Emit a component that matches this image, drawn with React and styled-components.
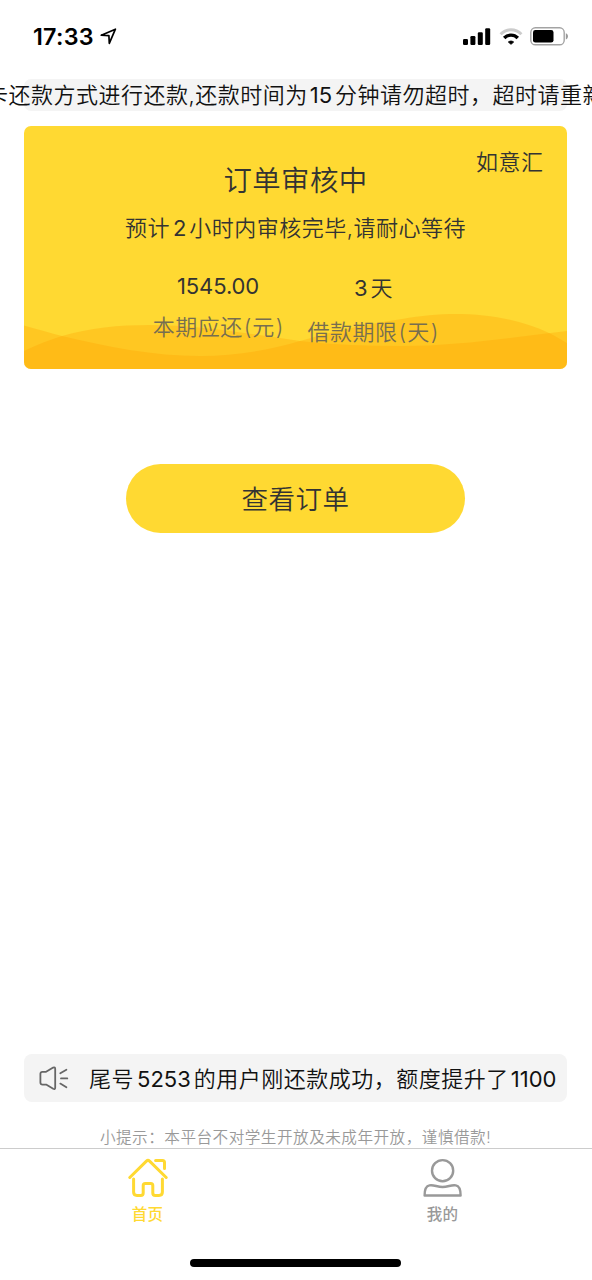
import React from "react";
import styled, { createGlobalStyle } from "styled-components";

const GlobalStyle = createGlobalStyle`
  * { box-sizing: border-box; }
  body {
    margin: 0;
    background: #fff;
    font-family: Inter, "Noto Sans CJK SC", sans-serif;
    color: #111;
  }
`;

const Screen = styled.div`
  width: 592px;
  height: 1280px;
  display: flex;
  flex-direction: column;
  overflow: hidden;
  background: #fff;
  padding-right: 1px;
`;

const StatusBar = styled.header`
  height: 79px;
  flex: none;
  display: flex;
  align-items: center;
  justify-content: space-between;
  padding: 0 22px 6px 33px;
`;

const StatusGroup = styled.div`
  display: flex;
  align-items: center;
  gap: ${(p) => p.$gap}px;
`;

const Clock = styled.span`
  font-size: 23.3px;
  line-height: 28px;
  font-weight: 600;
  letter-spacing: 0.25px;
  color: #000;
`;

const Text = styled.span`
  font-size: ${(p) => p.$size || 22}px;
  letter-spacing: ${(p) => p.$track ?? 0.5}px;
  line-height: ${(p) => p.$line || 32}px;
  font-weight: ${(p) => p.$weight || 360};
  color: ${(p) => p.$color || "#111"};
  white-space: nowrap;
`;

const Num = styled.span`
  font-size: 22px;
  font-weight: 400;
  letter-spacing: ${(p) => p.$track ?? 0}px;
  margin: 0 ${(p) => p.$after ?? 3}px 0 ${(p) => p.$before ?? 3}px;
`;

const Paren = styled.span`
  font-size: 22px;
  letter-spacing: 0;
  margin: 0 1px;
`;

const Notice = styled.div`
  height: 32px;
  flex: none;
  margin: 0 24px;
  border-radius: 7px;
  background: #f4f4f4;
  display: flex;
  justify-content: center;
`;

const Card = styled.section`
  position: relative;
  height: 243px;
  flex: none;
  margin: 15px 24px 0;
  border-radius: 7px;
  overflow: hidden;
  background: #ffd932;
  display: flex;
  flex-direction: column;
  align-items: center;
  padding-top: 34px;
`;

const Waves = styled.svg`
  position: absolute;
  left: 0;
  bottom: 0;
`;

const Brand = styled.div`
  position: absolute;
  top: 20px;
  right: 23.5px;
`;

const CardTitle = styled.h1`
  margin: 0;
  height: 42px;
  display: flex;
`;

const CardHint = styled.p`
  margin: 10px 0 0;
  height: 32px;
  display: flex;
`;

const Figures = styled.div`
  position: relative;
  left: 0.5px;
  display: flex;
  gap: 23px;
  margin-top: 26px;
`;

const Figure = styled.div`
  display: flex;
  flex-direction: column;
  align-items: center;
  gap: ${(p) => p.$gap}px;
  padding-top: ${(p) => p.$top || 0}px;
`;

const OrderButton = styled.button`
  width: 339px;
  height: 69px;
  flex: none;
  align-self: center;
  margin-top: 94.5px;
  padding: 2px 0 0;
  border: 0;
  border-radius: 35px;
  background: #ffd932;
  font-family: inherit;
`;

const News = styled.div`
  height: 48px;
  flex: none;
  margin: auto 24px 0;
  padding-left: 15px;
  border-radius: 8px;
  background: #f4f4f4;
  display: flex;
  align-items: center;
  gap: 20px;
`;

const NewsText = styled(Text)`
  padding-top: 1px;
`;

const Tip = styled.p`
  margin: 25px 0 0;
  height: 21px;
  flex: none;
  display: flex;
  justify-content: center;
`;

const TabBar = styled.nav`
  height: 111px;
  flex: none;
  margin-right: -1px;
  padding-right: 2px;
  border-top: 1px solid #ccc;
  display: grid;
  grid-template-columns: 1fr 1fr;
`;

const Tab = styled.div`
  display: flex;
  flex-direction: column;
  align-items: center;
  padding-top: 9px;
  gap: 7px;
`;

const HomeIndicator = styled.div`
  width: 211px;
  height: 8px;
  flex: none;
  align-self: center;
  margin-bottom: 13px;
  border-radius: 4px;
  background: #000;
`;

const LocationIcon = () => (
  <svg width="17" height="17" viewBox="0 0 17 17" fill="none" stroke="#000" strokeWidth="1.7" strokeLinejoin="round">
    <path d="M1.3 7.2 15.4 1.2 9.3 15.3 8.9 7.6Z" />
  </svg>
);

const SignalIcon = () => (
  <svg width="28" height="18" viewBox="0 0 28 18">
    <rect x="0" y="11" width="5" height="6" rx="1.2" />
    <rect x="7.4" y="8" width="5" height="9" rx="1.2" />
    <rect x="14.8" y="4.3" width="5" height="12.7" rx="1.2" />
    <rect x="22.2" y="0.3" width="5" height="16.7" rx="1.2" />
  </svg>
);

const WifiIcon = () => (
  <svg width="24" height="18" viewBox="0 0 24 18" fill="none" strokeWidth="3">
    <path d="M1.6 6.2C7.4.2 16.6.2 22.4 6.2" stroke="#ccc" />
    <path d="M5.2 10C9 6.1 15 6.1 18.8 10" stroke="#000" strokeWidth="3.4" />
    <path d="M9.4 14C11 12.8 13 12.8 14.6 14L12 16.3Z" fill="#000" stroke="#000" strokeWidth="1" />
  </svg>
);

const BatteryIcon = () => (
  <svg width="39" height="19" viewBox="0 0 39 19">
    <rect x="0.8" y="0.8" width="33.4" height="17" rx="4.6" fill="none" stroke="#a3a3a3" strokeWidth="1.4" />
    <rect x="3" y="3" width="20.5" height="12.6" rx="2.4" />
    <path d="M35.8 6.2C38.7 7 38.7 11.6 35.8 12.4Z" fill="#999" />
  </svg>
);

const SpeakerIcon = () => (
  <svg width="30" height="26" viewBox="0 0 30 26" fill="none" stroke="#666" strokeWidth="1.8" strokeLinecap="round" strokeLinejoin="round">
    <path d="M3.4 6.8H7.1L14.2 2.6Q16.2 1.8 16.2 3.9V22.7Q16.2 24.7 14.2 23.8L7.1 19.6H3.6Q1.4 19.6 1.4 17.5V8.8Q1.4 6.8 3.4 6.8Z" />
    <path d="M21.3 8.3 27.4 4.7M22 13.4H28.3M21.3 18.6 27.4 22.3" />
  </svg>
);

const HomeIcon = () => (
  <svg width="40" height="40" viewBox="0 0 40 40" fill="none" stroke="#ffd932" strokeWidth="3" strokeLinecap="round" strokeLinejoin="round">
    <path d="M1.8 19.5 18.4 3.1Q20 1.7 21.6 3.1L38.2 19.5" />
    <path d="M27.6 2.6H34.5Q36.5 2.6 36.5 4.6V10.6" />
    <path d="M5.6 21V34Q5.6 37.4 9 37.4H12.8Q15.2 37.4 15.2 35V27.500Q15.2 25.500 17.2 25.500H22.8Q24.8 25.500 24.8 27.500V35Q24.8 37.4 27.2 37.4H31Q34.4 37.4 34.4 34V21" />
  </svg>
);

const UserIcon = () => (
  <svg width="40" height="40" viewBox="0 0 40 40" fill="none" stroke="#999" strokeWidth="2.4" strokeLinejoin="round">
    <circle cx="19.6" cy="12.7" r="10.6" />
    <path d="M6.5 27.4C11 26.6 14 29 19.6 29S28.2 26.6 32.8 27.4Q37.6 28.2 37.6 37.5H1.6Q1.6 28.2 6.5 27.4Z" />
  </svg>
);

export default function App() {
  return (
    <Screen>
      <GlobalStyle />
      <StatusBar>
        <StatusGroup $gap={6}>
          <Clock>17:33</Clock>
          <LocationIcon />
        </StatusGroup>
        <StatusGroup $gap={7.5}>
          <SignalIcon />
          <WifiIcon />
          <BatteryIcon />
        </StatusGroup>
      </StatusBar>

      <Notice>
        <Text>卡还款方式进行还款,还款时间为<Num $before={2}>15</Num>分钟请勿超时，超时请重新</Text>
      </Notice>

      <Card>
        <Waves width="543" height="60" viewBox="0 183 543 60" fill="#ff9e00" fillOpacity="0.3">
          <path d="M0 199.6C13 203 25 207 38 210C85 221 130 230 176 230C210 230 242 225 276 215C310 205 342 198 378 193C397 189.500 414 188 431 188C468 188 500 195 525 207C532 210.500 538 214 543 217V243H0Z" />
          <path d="M0 225C12 219 25 214 38 210C65 202 95 199 125 199C178 199 225 208 276 215C310 219 344 220 378 220C435 220 490 211 543 205V243H0Z" />
        </Waves>
        <Brand>
          <Text $color="#333">如意汇</Text>
        </Brand>
        <CardTitle>
          <Text $size={28.4} $track={0.4} $line={42} $color="#333">订单审核中</Text>
        </CardTitle>
        <CardHint>
          <Text $color="#333">预计<Num>2</Num>小时内审核完毕,请耐心等待</Text>
        </CardHint>
        <Figures>
          <Figure $gap={9}>
            <Text $color="#333"><Num $track={-0.1} $before={0} $after={1}>1545.00</Num></Text>
            <Text $color="#776e50">本期应还<Paren>(</Paren>元<Paren>)</Paren></Text>
          </Figure>
          <Figure $top={2} $gap={12}>
            <Text $color="#333"><Num $before={0}>3</Num>天</Text>
            <Text $color="#776e50">借款期限<Paren>(</Paren>天<Paren>)</Paren></Text>
          </Figure>
        </Figures>
      </Card>

      <OrderButton>
        <Text $size={26.5} $line={40} $color="#333">查看订单</Text>
      </OrderButton>

      <News>
        <SpeakerIcon />
        <NewsText>尾号<Num>5253</Num>的用户刚还款成功，额度提升了<Num $before={2} $after={0}>1100</Num></NewsText>
      </News>
      <Tip>
        <Text $size={15.6} $track={0.5} $line={22} $color="#999">小提示：本平台不对学生开放及未成年开放，谨慎借款!</Text>
      </Tip>

      <TabBar>
        <Tab>
          <HomeIcon />
          <Text $size={15.5} $track={0.2} $line={20} $weight={450} $color="#ffd932">首页</Text>
        </Tab>
        <Tab>
          <UserIcon />
          <Text $size={15.5} $track={0.2} $line={20} $weight={450} $color="#999">我的</Text>
        </Tab>
      </TabBar>
      <HomeIndicator />
    </Screen>
  );
}
